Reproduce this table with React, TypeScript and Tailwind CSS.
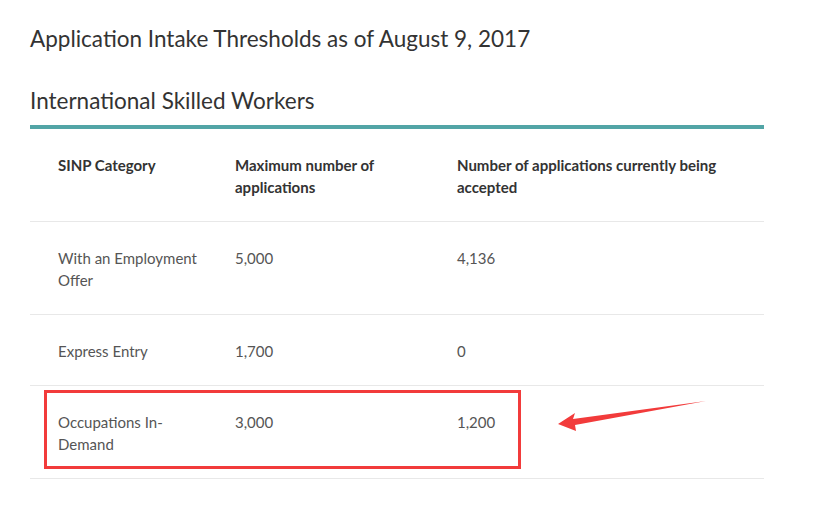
const rows = [
  { category: 'With an Employment Offer', max: '5,000', accepted: '4,136' },
  { category: 'Express Entry', max: '1,700', accepted: '0' },
  { category: 'Occupations In-Demand', max: '3,000', accepted: '1,200' },
];

const grid = 'grid grid-cols-[177px_222px_1fr] border-b border-[#e8e8e8]';
const cell = 'pl-[28px] pr-2 pt-[25px] pb-[23px] leading-[22px]';

export default function App() {
  return (
    <div className="relative w-[815px] h-[505px] bg-white font-['Lato',sans-serif] text-[#333]">
      <div className="pl-[30px] pt-[25px] w-[764px]">
        <h1 className="text-[22.5px] leading-[28px] text-[#333]">
          Application Intake Thresholds as of August 9, 2017
        </h1>
        <h2 className="mt-[34px] text-[22.5px] leading-[28px] text-[#333]">International Skilled Workers</h2>
        <div className="mt-[10px] h-1 bg-[#52a5a6]" />

        <div className="text-[15px]">
          <div className={grid}>
            <div className={`${cell} font-bold`}>SINP Category</div>
            <div className={`${cell} font-bold`}>Maximum number of applications</div>
            <div className={`${cell} font-bold pr-6`}>Number of applications currently being accepted</div>
          </div>
          {rows.map((r) => (
            <div key={r.category} className={`${grid} text-[#555]`}>
              <div className={cell}>{r.category}</div>
              <div className={cell}>{r.max}</div>
              <div className={cell}>{r.accepted}</div>
            </div>
          ))}
        </div>
      </div>

      {/* annotation */}
      <div className="absolute left-[44px] top-[390px] w-[477px] h-[79px] border-[3px] border-[#f23b3b]" />
      <svg className="absolute left-0 top-0" width="815" height="505">
        <polygon points="558,424 575,413 573,419 706,401 575,425 576,431" fill="#f23b3b" />
      </svg>
    </div>
  );
}
